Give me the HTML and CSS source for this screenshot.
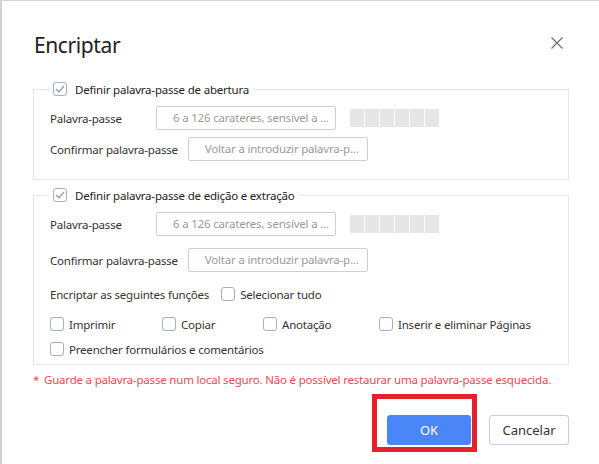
FILE: index.html
```html
<!DOCTYPE html>
<html lang="pt">
<head>
<meta charset="utf-8">
<title>Encriptar</title>
<link rel="stylesheet" href="styles.css">
</head>
<body>
<div class="window">
  <div class="dialog">
    <div class="header">
      <h1 class="title">Encriptar</h1>
      <button class="close" aria-label="Fechar">
        <svg width="12" height="12" viewBox="0 0 12 12"><path d="M0.5 0.5L11.5 11.5M11.5 0.5L0.5 11.5" stroke="#6b6b6b" stroke-width="1.1" fill="none"/></svg>
      </button>
    </div>

    <fieldset class="group group-open">
      <legend class="legend">
        <span class="cb checked"><svg width="10" height="8" viewBox="0 0 10 8"><path d="M1 4L4 6.8L9 1" stroke="#8d9bb3" stroke-width="1.3" fill="none"/></svg></span>
        <span class="legend-text">Definir palavra-passe de abertura</span>
      </legend>
      <div class="row row-first">
        <span class="label">Palavra-passe</span>
        <div class="input">6 a 126 carateres, sensível a ...</div>
        <div class="meter"><i></i><i></i><i></i><i></i><i></i><i></i></div>
      </div>
      <div class="row row-second">
        <span class="label">Confirmar palavra-passe</span>
        <div class="input">Voltar a introduzir palavra-p...</div>
      </div>
    </fieldset>

    <fieldset class="group group-edit">
      <legend class="legend">
        <span class="cb checked"><svg width="10" height="8" viewBox="0 0 10 8"><path d="M1 4L4 6.8L9 1" stroke="#8d9bb3" stroke-width="1.3" fill="none"/></svg></span>
        <span class="legend-text">Definir palavra-passe de edição e extração</span>
      </legend>
      <div class="row row-first">
        <span class="label">Palavra-passe</span>
        <div class="input">6 a 126 carateres, sensível a ...</div>
        <div class="meter"><i></i><i></i><i></i><i></i><i></i><i></i></div>
      </div>
      <div class="row row-second-wide">
        <span class="label">Confirmar palavra-passe</span>
        <div class="input">Voltar a introduzir palavra-p...</div>
      </div>
      <div class="line line-funcs">
        <span class="label-plain">Encriptar as seguintes funções</span>
        <label class="check"><span class="cb"></span>Selecionar tudo</label>
      </div>
      <div class="grid-funcs">
        <label class="check"><span class="cb"></span>Imprimir</label>
        <label class="check"><span class="cb"></span>Copiar</label>
        <label class="check"><span class="cb"></span>Anotação</label>
        <label class="check"><span class="cb"></span>Inserir e eliminar Páginas</label>
      </div>
      <div class="line line-last">
        <label class="check"><span class="cb"></span>Preencher formulários e comentários</label>
      </div>
    </fieldset>

    <p class="warning"><span class="star">*</span>Guarde a palavra-passe num local seguro. Não é possível restaurar uma palavra-passe esquecida.</p>

    <div class="actions">
      <div class="ok-wrap">
        <button class="btn btn-primary">OK</button>
        <span class="highlight"></span>
      </div>
      <button class="btn btn-default">Cancelar</button>
    </div>
  </div>
</div>
</body>
</html>
```

FILE: styles.css
```css
* { box-sizing: border-box; }
html, body { margin: 0; padding: 0; background: #fff; }
body {
  font-family: "Noto Sans", "Open Sans", sans-serif;
  font-size: 11.5px;
  letter-spacing: -0.2px;
  color: #333;
}
.window {
  width: 599px;
  height: 464px;
  border-left: 2px solid #d2d2d2;
  border-top: 1px solid #d2d2d2;
  overflow: hidden;
}
.dialog {
  padding: 0 30px 0 31px;
}
.header {
  height: 78px;
  display: flex;
  align-items: flex-start;
  justify-content: space-between;
  padding-top: 29px;
}
.title {
  margin: 0;
  font-weight: 400;
  font-size: 21px;
  letter-spacing: -0.4px;
  line-height: 30px;
  color: #222;
  padding-left: 1px;
}
.close {
  border: 0;
  background: none;
  padding: 0;
  margin: 7px 6px 0 0;
  width: 12px;
  height: 12px;
  display: block;
}
.close svg { display: block; }

.group {
  margin: 0;
  border: 1px solid #e6e6e6;
  padding: 0 16px;
  min-width: 0;
}
.group-open { padding-bottom: 18px; }
.group-edit { margin-top: 5px; padding-bottom: 5px; }
.legend {
  padding: 0 5px 0 3px;
  height: 20px;
  display: flex;
  align-items: center;
  color: #222;
}
.legend-text { margin-left: 8px; }

.cb {
  width: 14px;
  height: 14px;
  border: 1px solid #a7afbd;
  border-radius: 3px;
  display: inline-flex;
  align-items: center;
  justify-content: center;
  flex: none;
  background: #fff;
}
.cb svg { display: block; }

.row {
  display: flex;
  align-items: center;
  height: 24px;
  margin-top: 7px;
}
.group-edit .row-second-wide { margin-top: 12px; }
.label {
  min-width: 96px;
  margin-right: 10px;
  white-space: nowrap;
}
.input {
  width: 180px;
  height: 24px;
  border: 1px solid #cfcfcf;
  border-radius: 2px;
  color: #9a9a9a;
  padding: 0 0 0 16px;
  line-height: 22px;
  white-space: nowrap;
  overflow: hidden;
}
.meter {
  display: flex;
  gap: 1px;
  margin-left: 14px;
}
.meter i {
  display: block;
  width: 14px;
  height: 18px;
  background: #e6e6e6;
}

.line {
  display: flex;
  align-items: center;
  height: 20px;
}
.line-funcs { margin-top: 12px; }
.line-last { margin-top: 5px; }
.label-plain { margin-right: 12px; }
.check {
  display: inline-flex;
  align-items: center;
  white-space: nowrap;
}
.check .cb { margin-right: 5px; }
.grid-funcs {
  display: grid;
  grid-template-columns: 112px 101px 116px auto;
  height: 20px;
  align-items: center;
  margin-top: 10px;
}

.warning {
  margin: 7px 0 0 0;
  color: #ef4a50;
  line-height: 16px;
  white-space: nowrap;
}
.star { display: inline-block; width: 11px; }

.actions {
  display: flex;
  justify-content: flex-end;
  gap: 18px;
  margin-top: 27px;
}
.ok-wrap { position: relative; }
.btn {
  height: 30px;
  border-radius: 3px;
  font-family: "Noto Sans", "Open Sans", sans-serif;
  font-size: 13px;
  padding: 0;
  display: block;
}
.btn-primary {
  width: 84px;
  background: #4a86f7;
  border: 1px solid #4a86f7;
  color: #fff;
}
.btn-default {
  width: 80px;
  background: #fff;
  border: 1px solid #c6cbd4;
  color: #333;
}
.highlight {
  position: absolute;
  left: -15px;
  right: -6px;
  top: -21px;
  bottom: -7px;
  border: 5px solid #e5212b;
  pointer-events: none;
}
```
